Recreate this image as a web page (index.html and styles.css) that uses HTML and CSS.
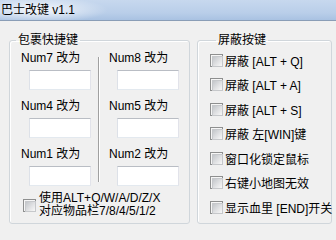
FILE: index.html
```html
<!DOCTYPE html>
<html lang="zh-CN">
<head>
<meta charset="utf-8">
<title>巴士改键 v1.1</title>
<link rel="stylesheet" href="styles.css">
</head>
<body>
<div class="titlebar"><span class="title">巴士改键 v1.1</span></div>
<div class="client">
  <fieldset class="group group-left">
    <legend>包裹快捷键</legend>
    <div class="cols">
      <div class="col col-a">
        <div class="field"><div class="lbl">Num7 改为</div><input class="box" type="text"></div>
        <div class="field"><div class="lbl">Num4 改为</div><input class="box" type="text"></div>
        <div class="field"><div class="lbl">Num1 改为</div><input class="box" type="text"></div>
      </div>
      <div class="divider"></div>
      <div class="col col-b">
        <div class="field"><div class="lbl">Num8 改为</div><input class="box" type="text"></div>
        <div class="field"><div class="lbl">Num5 改为</div><input class="box" type="text"></div>
        <div class="field"><div class="lbl">Num2 改为</div><input class="box" type="text"></div>
      </div>
    </div>
    <div class="opt">
      <span class="cb"></span>
      <div class="opt-text">使用ALT+Q/W/A/D/Z/X<br>对应物品栏7/8/4/5/1/2</div>
    </div>
  </fieldset>
  <fieldset class="group group-right">
    <legend>屏蔽按键</legend>
    <div class="chk"><span class="cb"></span><span>屏蔽 [ALT + Q]</span></div>
    <div class="chk"><span class="cb"></span><span>屏蔽 [ALT + A]</span></div>
    <div class="chk"><span class="cb"></span><span>屏蔽 [ALT + S]</span></div>
    <div class="chk"><span class="cb"></span><span>屏蔽 左[WIN]键</span></div>
    <div class="chk"><span class="cb"></span><span>窗口化锁定鼠标</span></div>
    <div class="chk"><span class="cb"></span><span>右键小地图无效</span></div>
    <div class="chk"><span class="cb"></span><span>显示血里 [END]开关</span></div>
  </fieldset>
</div>
</body>
</html>
```

FILE: styles.css
```css
* {
  box-sizing: border-box;
}

html,
body {
  margin: 0;
}

body {
  width: 336px;
  height: 225px;
  overflow: hidden;
  background: #f0f0f0;
  font-family: "Liberation Sans", "Noto Sans CJK SC", sans-serif;
  font-size: 12px;
  color: #000;
}

.titlebar {
  height: 21px;
  padding-left: 1px;
  line-height: 20px;
  border-bottom: 1px solid #8a9db6;
  background:
    radial-gradient(ellipse 70px 13px at 38px 10px, rgba(255, 255, 255, 0.85), rgba(255, 255, 255, 0)),
    linear-gradient(#c7d8ee, #b9cee9 65%, #a9c2e2);
}

.title {
  white-space: nowrap;
}

.client {
  display: flex;
  gap: 7px;
  height: 204px;
  padding: 11px 4px 1px 9px;
}

.group {
  margin: 0;
  padding: 0;
  min-width: 0;
  border: 1px solid #d0d6db;
  border-radius: 3px;
  box-shadow: inset 1px 1px 0 #fff;
}

.group legend {
  margin-left: 6px;
  padding: 0 2px;
  line-height: 16px;
  font-size: 12px;
  white-space: nowrap;
}

.group-left {
  width: 181px;
  padding-top: 3px;
}

.group-right {
  width: 135px;
  padding-left: 12px;
}

.cols {
  display: flex;
}

.col-a {
  width: 88px;
  padding-left: 11px;
}

.col-b {
  padding-left: 9px;
}

.divider {
  width: 2px;
  height: 125px;
  margin-top: 6px;
  border-left: 1px solid #a0a0a0;
  border-right: 1px solid #fff;
}

.field + .field {
  margin-top: 9px;
}

.lbl {
  line-height: 15px;
  white-space: nowrap;
}

.box {
  display: block;
  width: 62px;
  height: 20px;
  margin: 4px 0 0 8px;
  padding: 0;
  background: #fff;
  border: 1px solid;
  border-color: #b9bdc4 #e2e3ea #e3e9ef #dde1e8;
  font: inherit;
}

.opt {
  display: flex;
  align-items: center;
  margin-top: 6px;
  padding-left: 13px;
}

.opt-text {
  margin-left: 3px;
  line-height: 13px;
  white-space: nowrap;
}

.chk {
  display: flex;
  align-items: center;
  height: 24.5px;
  white-space: nowrap;
}

.chk .cb {
  margin-right: 2px;
}

.cb {
  flex: none;
  width: 13px;
  height: 13px;
  padding: 1px;
  border: 1px solid #8e8f8f;
  background: #f6f6f6;
}

.cb::before {
  content: "";
  display: block;
  width: 9px;
  height: 9px;
  border: 1px solid #c6c8cb;
  background: linear-gradient(135deg, #c3c6ca, #e1e2e4 55%, #f8f8f8);
}
```
